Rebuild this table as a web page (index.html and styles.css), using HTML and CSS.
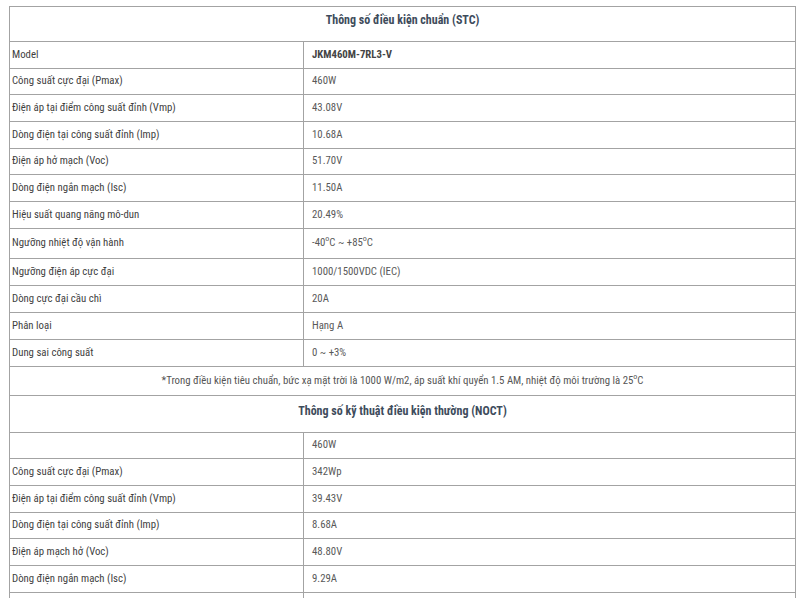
FILE: index.html
```html
<!DOCTYPE html>
<html lang="vi">
<head>
<meta charset="utf-8">
<title>Thông số kỹ thuật</title>
<link rel="stylesheet" href="styles.css">
</head>
<body>
<div class="wrap">
<table class="spec">
  <colgroup><col class="c1"><col class="c2"></colgroup>
  <tbody>
    <tr class="head"><td colspan="2">Thông số điều kiện chuẩn (STC)</td></tr>
    <tr><td class="lbl">Model</td><td class="val strong">JKM460M-7RL3-V</td></tr>
    <tr><td class="lbl">Công suất cực đại (Pmax)</td><td class="val">460W</td></tr>
    <tr><td class="lbl">Điện áp tại điểm công suất đỉnh (Vmp)</td><td class="val">43.08V</td></tr>
    <tr><td class="lbl">Dòng điện tại công suất đỉnh (Imp)</td><td class="val">10.68A</td></tr>
    <tr><td class="lbl">Điện áp hở mạch (Voc)</td><td class="val">51.70V</td></tr>
    <tr><td class="lbl">Dòng điện ngắn mạch (Isc)</td><td class="val">11.50A</td></tr>
    <tr><td class="lbl">Hiệu suất quang năng mô-dun</td><td class="val">20.49%</td></tr>
    <tr class="tall"><td class="lbl top">Ngưỡng nhiệt độ vận hành</td><td class="val">-40<sup>o</sup>C ~ +85<sup>o</sup>C</td></tr>
    <tr class="r27"><td class="lbl">Ngưỡng điện áp cực đại</td><td class="val">1000/1500VDC (IEC)</td></tr>
    <tr class="r27"><td class="lbl">Dòng cực đại cầu chì</td><td class="val">20A</td></tr>
    <tr class="r27"><td class="lbl">Phân loại</td><td class="val">Hạng A</td></tr>
    <tr class="r27"><td class="lbl">Dung sai công suất</td><td class="val">0 ~ +3%</td></tr>
    <tr class="note"><td colspan="2">*Trong điều kiện tiêu chuẩn, bức xạ mặt trời là 1000 W/m2, áp suất khí quyển 1.5 AM, nhiệt độ môi trường là 25<sup>o</sup>C</td></tr>
    <tr class="head2"><td colspan="2">Thông số kỹ thuật điều kiện thường (NOCT)</td></tr>
    <tr><td class="lbl"></td><td class="val">460W</td></tr>
    <tr><td class="lbl">Công suất cực đại (Pmax)</td><td class="val">342Wp</td></tr>
    <tr><td class="lbl">Điện áp tại điểm công suất đỉnh (Vmp)</td><td class="val">39.43V</td></tr>
    <tr><td class="lbl">Dòng điện tại công suất đỉnh (Imp)</td><td class="val">8.68A</td></tr>
    <tr><td class="lbl">Điện áp mạch hở (Voc)</td><td class="val">48.80V</td></tr>
    <tr><td class="lbl">Dòng điện ngắn mạch (Isc)</td><td class="val">9.29A</td></tr>
    <tr><td class="lbl"></td><td class="val"></td></tr>
  </tbody>
</table>
</div>
</body>
</html>
```
FILE: styles.css
```css
html, body {
  margin: 0;
  padding: 0;
  background: #fff;
}
.wrap {
  padding: 6px 0 0 9px;
  overflow: hidden;
  height: 598px;
  box-sizing: border-box;
}
.spec {
  border-collapse: collapse;
  width: 786px;
  table-layout: fixed;
  font-family: "Roboto Condensed", "Liberation Sans Narrow", "DejaVu Sans Condensed", Roboto, sans-serif;
  font-size: 10.8px;
  color: #444;
}
.c1 { width: 294px; }
.c2 { width: 492px; }
.spec td {
  border: 1px solid #a3a3a3;
  padding: 0;
  height: 26.67px;
  box-sizing: border-box;
  vertical-align: middle;
  line-height: 14px;
}
.spec .lbl {
  padding-left: 2px;
  color: #3f3f3f;
}
.spec .lbl.top {
  vertical-align: top;
  padding-top: 7px;
}
.spec .val {
  padding-left: 8px;
  color: #595959;
}
.spec .strong {
  font-weight: bold;
  color: #444;
}
.spec tr.tall td { height: 30px; }
.spec tr.r27 td { height: 27px; }
.spec tr.head td {
  height: 35px;
  text-align: center;
  font-weight: bold;
  font-size: 12px;
  color: #3e4c5c;
  vertical-align: top;
  padding-top: 6px;
}
.spec tr.head2 td {
  height: 37px;
  text-align: center;
  font-weight: bold;
  font-size: 12px;
  color: #3e4c5c;
  vertical-align: top;
  padding-top: 8px;
}
.spec tr.note td {
  height: 29px;
  text-align: center;
  color: #555;
}
sup {
  font-size: 8px;
  line-height: 0;
  vertical-align: 5px;
}
```
